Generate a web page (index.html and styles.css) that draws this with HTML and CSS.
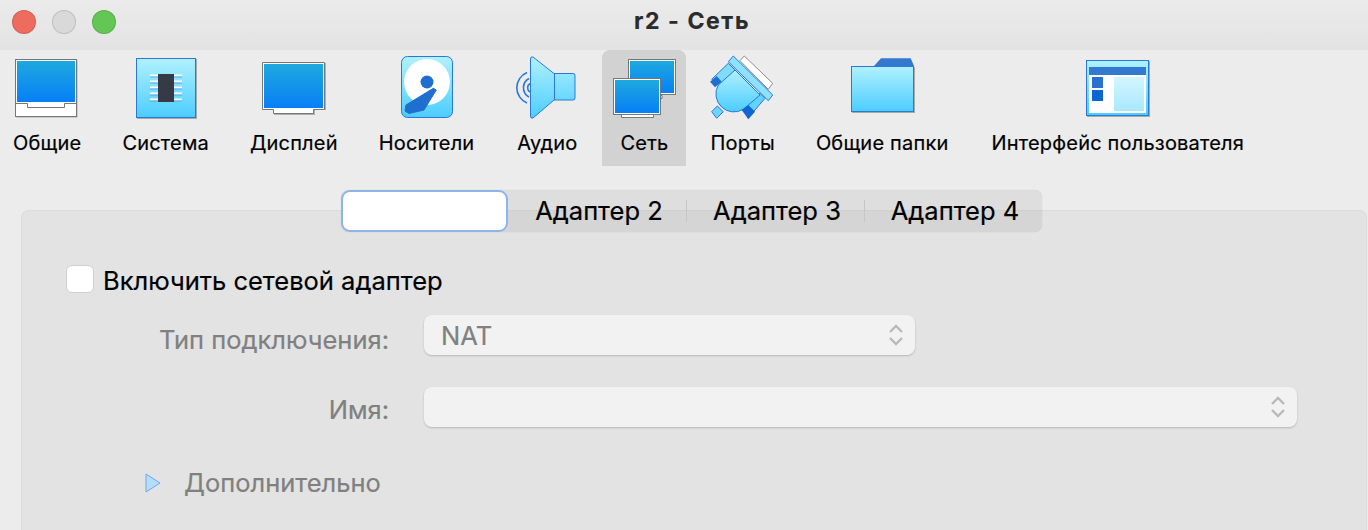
FILE: index.html
```html
<!DOCTYPE html>
<html lang="ru">
<head>
    <meta charset="UTF-8">
    <title>r2 - Сеть</title>
    <link rel="stylesheet" href="styles.css">
</head>
<body>
    <!-- shared gradients for the toolbar icons -->
    <svg class="defs" aria-hidden="true">
        <defs>
            <linearGradient id="screen" x1="0" y1="0" x2="0" y2="1">
                <stop offset="0" stop-color="#1fa9de"/>
                <stop offset="1" stop-color="#067ff7"/>
            </linearGradient>
            <linearGradient id="sky" x1="0" y1="0" x2="0" y2="1">
                <stop offset="0" stop-color="#b0f1ff"/>
                <stop offset="1" stop-color="#4ccdff"/>
            </linearGradient>
            <linearGradient id="pale" x1="0" y1="0" x2="0" y2="1">
                <stop offset="0" stop-color="#d4f6ff"/>
                <stop offset="1" stop-color="#a8e8ff"/>
            </linearGradient>
        </defs>
    </svg>

    <header class="titlebar">
        <div class="lights">
            <span class="light red"></span>
            <span class="light grey"></span>
            <span class="light green"></span>
        </div>
        <div class="title">r2 - Сеть</div>
    </header>

    <nav class="toolbar">
        <div class="tool">
            <svg class="icon" viewBox="0 0 64 64">
                <rect x="1.5" y="6.5" width="61" height="57" fill="#a9a9a9"/>
                <rect x="0.5" y="5.5" width="61" height="57" fill="#fff" stroke="#777"/>
                <rect x="2" y="7" width="58" height="41" fill="url(#screen)"/>
                <path d="M0 49.5H12.5V53.5H49.5V49.5H62" fill="none" stroke="#777"/>
            </svg>
            <span>Общие</span>
        </div>
        <div class="tool">
            <svg class="icon" viewBox="0 0 64 64">
                <rect x="3" y="5" width="60" height="60" fill="#a9a9a9"/>
                <rect x="2.5" y="4.5" width="59" height="59" fill="url(#sky)" stroke="#2a78d8"/>
                <path d="M16 21.5H48M16 27.5H48M16 33.5H48M16 39.5H48M16 45.5H48" stroke="#fff" stroke-width="2"/>
                <path d="M16 23H48M16 29H48M16 35H48M16 41H48M16 47H48" stroke="#5aa5e6"/>
                <rect x="24" y="20" width="16" height="28" fill="#343a46"/>
            </svg>
            <span>Система</span>
        </div>
        <div class="tool">
            <svg class="icon" viewBox="0 0 64 64">
                <path d="M1 9H64V56H53V61H12V56H1Z" fill="#b0b0b0"/>
                <path d="M0.5 8.5H62.5V55.5H51.5V59.5H11.5V55.5H0.5Z" fill="#fff" stroke="#777"/>
                <rect x="2" y="10" width="59" height="44" fill="url(#screen)"/>
            </svg>
            <span>Дисплей</span>
        </div>
        <div class="tool">
            <svg class="icon" viewBox="0 0 64 64">
                <rect x="6.5" y="2.5" width="51" height="61" rx="6" fill="url(#sky)" stroke="#2a78d8"/>
                <circle cx="32" cy="28" r="23" fill="#fff"/>
                <circle cx="32" cy="28" r="6.5" fill="#1f6fd0"/>
                <path d="M38.3 34.3L41.3 36L29 56L14 59.5L10 57L11 51Z" fill="#1f6fd0" stroke="#1f6fd0" stroke-linejoin="round"/>
            </svg>
            <span>Носители</span>
        </div>
        <div class="tool">
            <svg class="icon" viewBox="0 0 64 64">
                <path d="M15.5 5Q15.5 2 18 3L39 19.5H58Q60 19.5 60 21.5V44Q60 46 58 46H39L18 64Q15.5 65 15.5 62Z" fill="url(#sky)" stroke="#2a78d8"/>
                <path d="M39.5 19.5V46" stroke="#2a78d8" fill="none"/>
                <g fill="none" stroke="#2a78d8" stroke-width="1.6">
                    <path d="M12 18.5A16.5 16.5 0 0 0 12 49"/>
                    <path d="M14 24.5A10.5 10.5 0 0 0 14 43"/>
                    <path d="M15 29.5A5 5 0 0 0 15 38"/>
                </g>
            </svg>
            <span>Аудио</span>
        </div>
        <div class="tool active">
            <svg class="icon" viewBox="0 0 64 64">
                <path d="M41 41.5H50V44.5H41Z" fill="#fff" stroke="#777"/>
                <rect x="16.5" y="5.5" width="47" height="35" fill="#fff" stroke="#777"/>
                <rect x="18" y="7" width="44" height="32" fill="url(#screen)"/>
                <path d="M9.5 60.5H41.5V63.5H9.5Z" fill="#fff" stroke="#777"/>
                <rect x="1.5" y="24.5" width="47" height="36" fill="#fff" stroke="#777"/>
                <rect x="3" y="26" width="44" height="33" fill="url(#screen)"/>
            </svg>
            <span>Сеть</span>
        </div>
        <div class="tool ports">
            <svg class="icon" viewBox="0 0 64 64">
                <path d="M30 6.7L34.3 2L62.7 29.3L58.3 35.3Z" fill="#fff" stroke="#8a8a8a"/>
                <path d="M1.7 57.7L7.3 52L13.3 57.7L6.7 64.3Z" fill="#6fd3ff" stroke="#2a78d8"/>
                <path d="M1.7 25.3L18.3 9.3L25 16L10 31Z" fill="#7fdcff" stroke="#2a78d8"/>
                <path d="M31.7 55.3L50 39.3L55 44.3L39.3 62.7Z" fill="#62d2ff" stroke="#2a78d8"/>
                <path d="M8.3 31L25 16L50 41L33.3 55.3A18 18 0 0 1 8.3 31Z" fill="url(#sky)" stroke="#2a78d8"/>
                <path d="M0 27.7L6.7 22L11.7 27.7L5 33.3Z" fill="#1f6fd0"/>
                <path d="M31.7 56L38.3 51L45 57.7L38.3 65.3Z" fill="#1264d2"/>
                <path d="M18.3 7.7L23.3 2L62.7 41L58.3 46.7Z" fill="#8fe2ff" stroke="#2a78d8" stroke-linejoin="round"/>
            </svg>
            <span>Порты</span>
        </div>
        <div class="tool">
            <svg class="icon" viewBox="0 0 64 64">
                <path d="M24 12L31 4.300H60.700L64 12Z" fill="#3478d0"/>
                <rect x="2" y="13" width="63" height="46" fill="#a9a9a9"/>
                <rect x="1.500" y="12.500" width="62" height="45" fill="url(#sky)" stroke="#2a78d8"/>
            </svg>
            <span>Общие папки</span>
        </div>
        <div class="tool">
            <svg class="icon" viewBox="0 0 64 64">
                <rect x="1" y="7" width="63" height="56" fill="#a9a9a9"/>
                <rect x="0.500" y="6.500" width="62" height="55" fill="url(#sky)" stroke="#2a78d8"/>
                <rect x="3" y="13" width="57" height="46" fill="#fff"/>
                <rect x="3" y="13" width="57" height="8" fill="#3478d0"/>
                <rect x="6" y="23" width="11" height="11" fill="#2a70d0"/>
                <rect x="6" y="36" width="11" height="11" fill="#0a66d0"/>
                <rect x="28" y="23" width="30" height="34" fill="url(#pale)"/>
            </svg>
            <span>Интерфейс пользователя</span>
        </div>
    </nav>

    <main class="panel">
        <div class="tabs">
            <div class="tab selected"></div>
            <div class="tab">Адаптер 2</div>
            <div class="tab sep">Адаптер 3</div>
            <div class="tab sep">Адаптер 4</div>
        </div>

        <label class="enable">
            <span class="checkbox"></span>
            <span class="enable-text">Включить сетевой адаптер</span>
        </label>

        <div class="form">
            <div class="field-label">Тип подключения:</div>
            <div class="select short">
                <span>NAT</span>
                <svg class="updown" viewBox="0 0 16 22"><path d="M2 8L8 2L14 8M2 14L8 20L14 14" fill="none" stroke="#b9b9b9" stroke-width="2.400"/></svg>
            </div>
            <div class="field-label name">Имя:</div>
            <div class="select long">
                <span></span>
                <svg class="updown" viewBox="0 0 16 22"><path d="M2 8L8 2L14 8M2 14L8 20L14 14" fill="none" stroke="#b9b9b9" stroke-width="2.400"/></svg>
            </div>
        </div>

        <div class="more">
            <svg class="arrow" viewBox="0 0 16 20"><path d="M1 1L15 10L1 19Z" fill="#b5dcfb" stroke="#6fa8ea"/></svg>
            <span>Дополнительно</span>
        </div>
    </main>
</body>
</html>
```

FILE: styles.css
```css
body {
    margin: 0;
    height: 530px;
    overflow: hidden;
    background: #ececec;
    font-family: Inter, "Liberation Sans", sans-serif;
    color: #000;
    -webkit-text-stroke: 0.2px;
}
.defs {
    position: absolute;
    width: 0;
    height: 0;
}

/* title bar */
.titlebar {
    height: 50px;
    display: grid;
    grid-template-columns: 1fr auto 1fr;
    align-items: center;
    background: linear-gradient(#ebebeb, #e3e3e3);
}
.lights {
    display: flex;
    gap: 16px;
    padding: 0 0 6px 12px;
}
.light {
    width: 22px;
    height: 22px;
    border-radius: 50%;
    border: 1px solid rgba(0,0,0,0.12);
}
.red { background: #ee6b60; }
.grey { background: #d9d9d9; }
.green { background: #63c655; }
.title {
    font-size: 23px;
    font-weight: 700;
    letter-spacing: 1.6px;
    color: #2b2b2b;
    padding: 0 0 8px 16px;
}

/* toolbar */
.toolbar {
    height: 116px;
    display: flex;
    gap: 41px;
    padding-left: 13px;
}
.tool {
    display: flex;
    flex-direction: column;
    align-items: center;
    padding-top: 4px;
    font-size: 20px;
    letter-spacing: 0.2px;
    white-space: nowrap;
}
.tool span {
    margin-top: 13px;
}
.tool:last-child {
    margin-left: 2px;
}
.icon {
    width: 64px;
    height: 64px;
    overflow: visible;
}
.tool.ports .icon {
    margin-left: -2px;
}
.tool.active {
    background: #d2d2d2;
    border-radius: 8px 8px 0 0;
    width: 84px;
    margin: 0 -17px 0 -18px;
}

/* main panel */
.panel {
    margin: 44px 1px 0 21px;
    height: 320px;
    background: #e3e3e3;
    border: 1px solid #dcdcdc;
    border-bottom: none;
    border-radius: 8px 8px 0 0;
    box-sizing: border-box;
}
.tabs {
    display: flex;
    width: 701px;
    height: 42px;
    margin: -21px 0 0 319px;
    background: rgba(0,0,0,0.06);
    border-radius: 8px;
    box-shadow: 0 0 1px rgba(0,0,0,0.2);
    font-size: 25.5px;
}
.tab {
    width: 178px;
    box-sizing: border-box;
    padding: 0 0 2px 4px;
    display: flex;
    align-items: center;
    justify-content: center;
}
.tab.sep {
    position: relative;
}
.tab.sep::before {
    content: "";
    position: absolute;
    left: 0;
    top: 10px;
    height: 22px;
    width: 1px;
    background: #c6c6c6;
}
.tab.selected {
    width: 167px;
    height: 42px;
    padding: 0;
    background: #fff;
    border: 2px solid #8fb4ea;
    border-radius: 9px;
}

.enable {
    display: flex;
    align-items: center;
    gap: 9px;
    height: 28px;
    margin: 33px 0 0 44px;
    font-size: 25.5px;
}
.enable-text {
    padding-top: 2px;
}
.checkbox {
    width: 26px;
    height: 26px;
    background: #fff;
    border: 1px solid #cfcfcf;
    border-radius: 6px;
}

/* form */
.form {
    display: grid;
    grid-template-columns: 367px auto;
    column-gap: 35px;
    row-gap: 32px;
    justify-items: start;
    margin-top: 22px;
    color: #808080;
    font-size: 25.5px;
}
.field-label {
    justify-self: end;
    padding-top: 9px;
}
.field-label.name {
    padding-top: 7px;
}
.select {
    height: 40px;
    box-sizing: border-box;
    display: flex;
    align-items: center;
    justify-content: space-between;
    padding: 0 11px 0 17px;
    background: #f2f2f2;
    border-radius: 8px;
    box-shadow: 0 1px 2px rgba(0,0,0,0.2);
}
.select.short { width: 491px; }
.select.long { width: 873px; }
.updown {
    width: 16px;
    height: 22px;
}
.more {
    display: flex;
    align-items: center;
    gap: 23px;
    margin: 40px 0 0 123px;
    color: #808080;
    font-size: 25.5px;
}
.arrow {
    width: 16px;
    height: 20px;
}
```
